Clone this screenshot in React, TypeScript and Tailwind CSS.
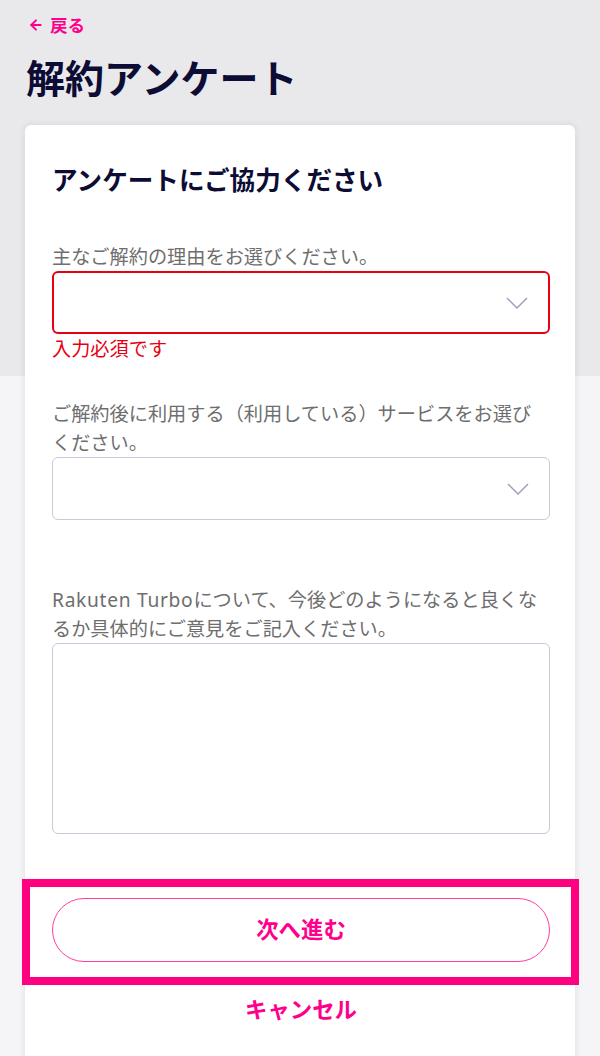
import { ArrowLeft } from "lucide-react";

function Chevron() {
  return (
    <svg width="22" height="12" viewBox="0 0 22 12" fill="none" className="shrink-0">
      <path d="M1 1L11 11L21 1" stroke="#a0a0bb" strokeWidth="1.5" />
    </svg>
  );
}

export default function App() {
  return (
    <main
      className="min-h-screen bg-[linear-gradient(#e9e9eb_0,#e9e9eb_376px,#f5f5f7_376px)] px-[25px] pt-[13px]"
      style={{ fontFamily: '"Noto Sans", "Noto Sans CJK JP", sans-serif' }}
    >
      {/* back link */}
      <a className="flex items-center gap-[6px] pl-[3px] text-[17.6px] font-bold leading-[24px] text-[#ff008c]">
        <ArrowLeft size={16} strokeWidth={3} />
        <span>戻る</span>
      </a>

      <h1 className="mt-[17px] pl-px text-[39px] font-bold leading-[48px] text-[#0c0c34]">
        解約アンケート
      </h1>

      {/* form card */}
      <section className="mt-[23px] rounded-[6px] bg-white pt-10 pr-[25px] pb-12 pl-[27px] shadow-[0_0_6px_rgba(40,40,110,0.12)]">
        <h2 className="text-[25.6px] font-bold leading-[32px] text-[#0c0c34]">
          アンケートにご協力ください
        </h2>

        <p className="mt-[45px] text-[19.2px] leading-[29px] text-[#6e6e6e]">
          主なご解約の理由をお選びください。
        </p>
        <div className="flex h-[63px] items-center justify-end rounded-[6px] border-2 border-[#e60012] px-5">
          <Chevron />
        </div>
        <p className="text-[19.2px] leading-[29px] text-[#e60012]">入力必須です</p>

        <p className="mt-9 text-[19.2px] leading-[29px] text-[#6e6e6e]">
          ご解約後に利用する（利用している）サービスをお選びください。
        </p>
        <div className="flex h-[63px] items-center justify-end rounded-[6px] border border-[#c9c9dc] px-5">
          <Chevron />
        </div>

        <p className="mt-[65px] text-[19.2px] leading-[29px] text-[#6e6e6e]">
          <span className="tracking-[0.7px]">Rakuten Turbo</span>
          について、今後どのようになると良くなるか具体的にご意見をご記入ください。
        </p>
        <textarea className="block h-[191px] w-full resize-none rounded-[6px] border border-[#c9c9dc] outline-none" />

        {/* highlighted next button */}
        <div className="mt-[45px] -ml-[30px] -mr-[29px] border-8 border-[#ff0080] pt-[11px] pr-[21px] pb-[15px] pl-[22px]">
          <button className="flex h-[64px] w-full items-center justify-center rounded-full border border-[#ff3ea0] text-[22.4px] font-bold text-[#ff008c]">
            次へ進む
          </button>
        </div>

        <button className="mt-[10px] block w-full text-center text-[22.4px] font-bold leading-[30px] text-[#ff008c]">
          キャンセル
        </button>
      </section>
    </main>
  );
}
